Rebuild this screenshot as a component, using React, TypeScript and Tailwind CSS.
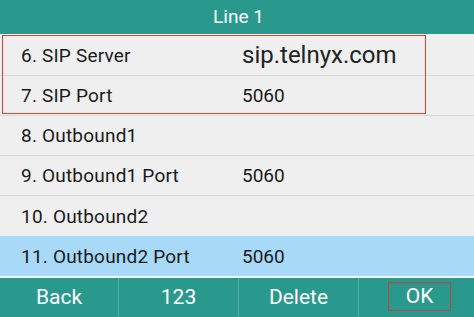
const rows = [
  { label: '6. SIP Server', value: 'sip.telnyx.com', big: true },
  { label: '7. SIP Port', value: '5060' },
  { label: '8. Outbound1', value: '' },
  { label: '9. Outbound1 Port', value: '5060' },
  { label: '10. Outbound2', value: '' },
  { label: '11. Outbound2 Port', value: '5060', active: true },
];

const keys = ['Back', '123', 'Delete', 'OK'];

export default function App() {
  return (
    <div className="w-[474px] h-[317px] flex flex-col bg-[#efefef] font-['Roboto',sans-serif] overflow-hidden">
      <div className="h-[34px] bg-[#2a998d] flex items-center justify-center text-white text-[19px] pl-[3px]">
        Line 1
      </div>
      <div className="relative flex flex-col pt-[2px]">
        {rows.map((r, i) => (
          <div
            key={r.label}
            className={`h-[40px] flex items-center text-[19px] text-[#1a1a1a] ${
              r.active ? 'bg-[#a8d9f7]' : 'bg-[#efefef]'
            } ${i < 4 ? 'border-b border-[#d8d8d8]' : ''}`}
          >
            <span className="w-[242px] pl-[21px] pt-[2px] tracking-[0.2px]">{r.label}</span>
            <span className={r.big ? 'text-[24px] text-[#222] pb-[2px]' : 'pt-[2px]'}>{r.value}</span>
          </div>
        ))}
        <div className="absolute left-[2px] top-[1px] w-[424px] h-[79px] border border-[#d9422f] pointer-events-none" />
      </div>
      <div className="h-[2px] bg-[#eef6fb]" />
      <div className="flex-1 bg-[#2a998d] flex text-white text-[21px]">
        <div className="w-[118px] flex items-center justify-center">Back</div>
        <div className="w-[120px] border-l border-[#55b0a6] flex items-center justify-center">123</div>
        <div className="w-[120px] border-l border-[#55b0a6] flex items-center justify-center">Delete</div>
        <div className="flex-1 border-l border-[#55b0a6] flex items-center justify-center">
          <span className="w-[63px] h-[29px] ml-[6px] mt-[-2px] border border-[#c8453c] flex items-center justify-center">
            OK
          </span>
        </div>
      </div>
    </div>
  );
}
